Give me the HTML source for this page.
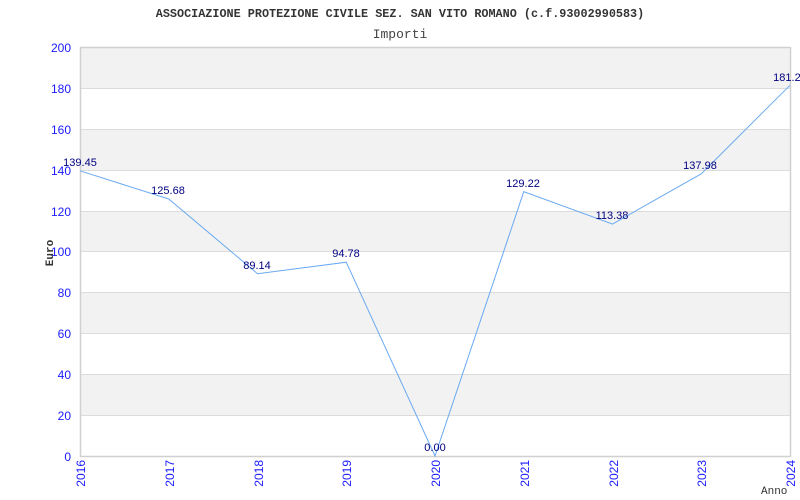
<!DOCTYPE html>
<html><head><meta charset="utf-8"><style>
html,body{margin:0;padding:0;background:#fff;width:800px;height:500px;overflow:hidden}
svg{display:block}
</style></head><body>
<svg width="800" height="500" xmlns="http://www.w3.org/2000/svg">
<g fill="#f2f2f2">
<rect x="80" y="47" width="710" height="41"/>
<rect x="80" y="129" width="710" height="41"/>
<rect x="80" y="211" width="710" height="41"/>
<rect x="80" y="292" width="710" height="41"/>
<rect x="80" y="374" width="710" height="41"/>
</g>
<g stroke="#dcdcdc" stroke-width="1">
<line x1="80" y1="88.5" x2="790" y2="88.5"/>
<line x1="80" y1="129.5" x2="790" y2="129.5"/>
<line x1="80" y1="170.5" x2="790" y2="170.5"/>
<line x1="80" y1="211.5" x2="790" y2="211.5"/>
<line x1="80" y1="251.5" x2="790" y2="251.5"/>
<line x1="80" y1="292.5" x2="790" y2="292.5"/>
<line x1="80" y1="333.5" x2="790" y2="333.5"/>
<line x1="80" y1="374.5" x2="790" y2="374.5"/>
<line x1="80" y1="415.5" x2="790" y2="415.5"/>
</g>
<g stroke="#d0d0d0" stroke-width="1.5" fill="none">
<line x1="80.5" y1="47" x2="80.5" y2="457"/>
<line x1="80" y1="456.5" x2="790" y2="456.5"/>
<line x1="790.5" y1="47" x2="790.5" y2="457"/>
<line x1="80" y1="47.5" x2="790" y2="47.5"/>
</g>
<text x="400" y="17" text-anchor="middle" font-family="Liberation Mono,monospace" font-size="11.8" font-weight="bold" fill="#333">ASSOCIAZIONE PROTEZIONE CIVILE SEZ. SAN VITO ROMANO (c.f.93002990583)</text>
<text x="400" y="38" text-anchor="middle" font-family="Liberation Mono,monospace" font-size="13" fill="#444">Importi</text>
<g font-family="Liberation Sans,sans-serif" font-size="12" fill="#1a1aff" text-anchor="end">
<text x="71" y="52">200</text><text x="71" y="93">180</text><text x="71" y="134">160</text>
<text x="71" y="175">140</text><text x="71" y="216">120</text><text x="71" y="256">100</text>
<text x="71" y="297">80</text><text x="71" y="338">60</text><text x="71" y="379">40</text>
<text x="71" y="420">20</text><text x="71" y="461">0</text>
</g>
<text transform="translate(53,253) rotate(-90)" text-anchor="middle" font-family="Liberation Mono,monospace" font-size="11" font-weight="bold" fill="#333">Euro</text>
<text x="761" y="494" font-family="Liberation Mono,monospace" font-size="11" fill="#333">Anno</text>
<g font-family="Liberation Sans,sans-serif" font-size="12" fill="#1a1aff" text-anchor="end">
<text transform="translate(85,460) rotate(-90)">2016</text>
<text transform="translate(174,460) rotate(-90)">2017</text>
<text transform="translate(263,460) rotate(-90)">2018</text>
<text transform="translate(351,460) rotate(-90)">2019</text>
<text transform="translate(440,460) rotate(-90)">2020</text>
<text transform="translate(529,460) rotate(-90)">2021</text>
<text transform="translate(618,460) rotate(-90)">2022</text>
<text transform="translate(706,460) rotate(-90)">2023</text>
<text transform="translate(795,460) rotate(-90)">2024</text>
</g>
<polyline fill="none" stroke="#6aaaf0" stroke-width="1" points="80,170.8 168.75,199 257.5,273.7 346.25,262.2 435,456 523.75,191.7 612.5,224.1 701.25,173.8 790,85.3"/>
<g font-family="Liberation Sans,sans-serif" font-size="11" fill="#000080" text-anchor="middle">
<text x="80" y="166">139.45</text>
<text x="168" y="194">125.68</text>
<text x="257" y="269">89.14</text>
<text x="346" y="257">94.78</text>
<text x="435" y="451">0.00</text>
<text x="523" y="187">129.22</text>
<text x="612" y="219">113.38</text>
<text x="700" y="169">137.98</text>
<text x="790" y="81">181.27</text>
</g>
</svg>
</body></html>
